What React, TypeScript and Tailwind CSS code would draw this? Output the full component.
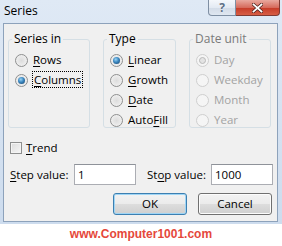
import React from "react";

function Radio({ checked, disabled }: { checked?: boolean; disabled?: boolean }) {
  return (
    <span
      className={
        disabled
          ? "flex h-[13px] w-[13px] shrink-0 items-center justify-center rounded-full border border-[#cfcfcf] bg-[#f5f5f5]"
          : "flex h-[13px] w-[13px] shrink-0 items-center justify-center rounded-full border border-[#8e8f8f] bg-[radial-gradient(circle_at_50%_50%,#dcdcdc_0%,#f6f6f6_100%)]"
      }
    >
      {checked &&
        (disabled ? (
          <span className="h-[7px] w-[7px] rounded-full border border-[#b9b9b9] bg-[#e3e3e3]" />
        ) : (
          <span className="h-[7px] w-[7px] rounded-full bg-[radial-gradient(circle_at_40%_35%,#9ad4f5_0%,#3a86bf_45%,#163f66_100%)]" />
        ))}
    </span>
  );
}

function Row({
  children,
  checked,
  disabled,
}: {
  children: React.ReactNode;
  checked?: boolean;
  disabled?: boolean;
}) {
  return (
    <div className="flex h-[20px] items-center gap-[5px]">
      <Radio checked={checked} disabled={disabled} />
      <span className={disabled ? "text-[#a3a3a3]" : "text-[#000]"}>{children}</span>
    </div>
  );
}

function Group({
  label,
  width,
  children,
  disabled,
}: {
  label: string;
  width: string;
  children: React.ReactNode;
  disabled?: boolean;
}) {
  return (
    <fieldset className={`${width} h-[97px] rounded-[3px] border border-[#d5dfe5] px-[6px]`}>
      <legend className={`ml-[-3px] px-[2px] text-[12px] leading-[16px] ${disabled ? "text-[#7a7a7a]" : "text-[#000]"}`}>
        {label}
      </legend>
      <div className="mt-[3px] flex flex-col">{children}</div>
    </fieldset>
  );
}

export default function App() {
  return (
    <div className="relative h-[246px] w-[282px] overflow-hidden bg-white font-['Open_Sans',sans-serif] text-[11.5px] text-black">
      {/* window frame */}
      <div className="flex h-[224px] w-[282px] flex-col bg-[linear-gradient(180deg,#dfe9f5_0%,#cddcee_100%)] pb-[2px] pl-[3px] pr-[4px]">
        {/* title bar */}
        <div className="flex h-[23px] items-start justify-between">
          <span className="ml-[1px] mt-[3px] text-[12px] leading-[16px]">Series</span>
          <div className="mr-[-2px] flex">
            <div className="flex h-[16px] w-[28px] items-center justify-center rounded-bl-[4px] border border-t-0 border-[#7f8fa3] bg-[linear-gradient(180deg,#f4f7fb_0%,#e3eaf3_50%,#d2dbe7_51%,#dfe7f1_100%)]">
              <span className="text-[12px] font-bold leading-[12px] text-[#5d6f86] [text-shadow:0_0_1px_#fff]">?</span>
            </div>
            <div className="flex h-[16px] w-[44px] items-center justify-center rounded-br-[4px] border border-l-0 border-t-0 border-[#7f3a33] bg-[linear-gradient(180deg,#e9a99f_0%,#d66b5c_50%,#c53a27_51%,#d75e45_100%)]">
              <svg width="11" height="10" viewBox="0 0 11 10">
                <path d="M1.5 1.5 L9.5 8.5 M9.5 1.5 L1.5 8.5" stroke="#4a1f1a" strokeWidth="3.2" strokeLinecap="square" />
                <path d="M1.5 1.5 L9.5 8.5 M9.5 1.5 L1.5 8.5" stroke="#ffffff" strokeWidth="1.8" strokeLinecap="square" />
              </svg>
            </div>
          </div>
        </div>
        {/* client area */}
        <div className="flex flex-1 flex-col border border-[#8da2bb] bg-[#f0f0f0]">
          <div className="ml-[4px] mt-[7px] flex gap-[13px]">
            <Group label="Series in" width="w-[82px]">
              <Row>
                <span className="underline underline-offset-2">R</span>ows
              </Row>
              <Row checked>
                <span className="outline-1 outline-dotted outline-[#000] outline-offset-0 px-[1px]">
                  <span className="underline underline-offset-2">C</span>olumns
                </span>
              </Row>
            </Group>
            <Group label="Type" width="w-[73px]">
              <Row checked>
                <span className="underline underline-offset-2">L</span>inear
              </Row>
              <Row>
                <span className="underline underline-offset-2">G</span>rowth
              </Row>
              <Row>
                <span className="underline underline-offset-2">D</span>ate
              </Row>
              <Row>
                Auto<span className="underline underline-offset-2">F</span>ill
              </Row>
            </Group>
            <Group label="Date unit" width="w-[82px]" disabled>
              <Row checked disabled>
                Day
              </Row>
              <Row disabled>Weekday</Row>
              <Row disabled>Month</Row>
              <Row disabled>Year</Row>
            </Group>
          </div>

          {/* trend */}
          <div className="ml-[6px] mt-[13px] flex h-[14px] items-center gap-[4px]">
            <span className="h-[12px] w-[12px] border border-[#8e8f8f] bg-[linear-gradient(135deg,#dcdcdc_0%,#f7f7f7_100%)] shadow-[inset_0_0_0_1px_#f4f4f4]" />
            <span>
              <span className="underline underline-offset-2">T</span>rend
            </span>
          </div>

          {/* step / stop */}
          <div className="ml-[6px] mt-[9px] flex h-[21px] items-center">
            <span className="w-[64px]">
              <span className="underline underline-offset-2">S</span>tep value:
            </span>
            <div className="flex h-[21px] w-[62px] items-center border border-[#abadb3] border-t-[#8e9299] bg-white pl-[3px]">
              1
            </div>
            <span className="ml-[11px] w-[64px]">
              St<span className="underline underline-offset-2">o</span>p value:
            </span>
            <div className="flex h-[21px] w-[62px] items-center border border-[#abadb3] border-t-[#8e9299] bg-white pl-[3px]">
              1000
            </div>
          </div>

          {/* buttons */}
          <div className="ml-[109px] mt-[8px] flex gap-[11px]">
            <button className="flex h-[22px] w-[74px] items-center justify-center rounded-[3px] border border-[#3c7fb1] bg-[linear-gradient(180deg,#f2f2f2_0%,#ebebeb_50%,#dddddd_51%,#cfcfcf_100%)] shadow-[inset_0_0_0_1px_#9fd5f5]">
              OK
            </button>
            <button className="flex h-[22px] w-[74px] items-center justify-center rounded-[3px] border border-[#707070] bg-[linear-gradient(180deg,#f2f2f2_0%,#ebebeb_50%,#dddddd_51%,#cfcfcf_100%)] shadow-[inset_0_0_0_1px_#fcfcfc]">
              Cancel
            </button>
          </div>
        </div>
      </div>
      <div className="mt-[3px] text-center font-['Liberation_Sans',Arial,sans-serif] text-[12px] font-bold leading-[14px] text-[#e5473b]">
        www.Computer1001.com
      </div>
    </div>
  );
}
